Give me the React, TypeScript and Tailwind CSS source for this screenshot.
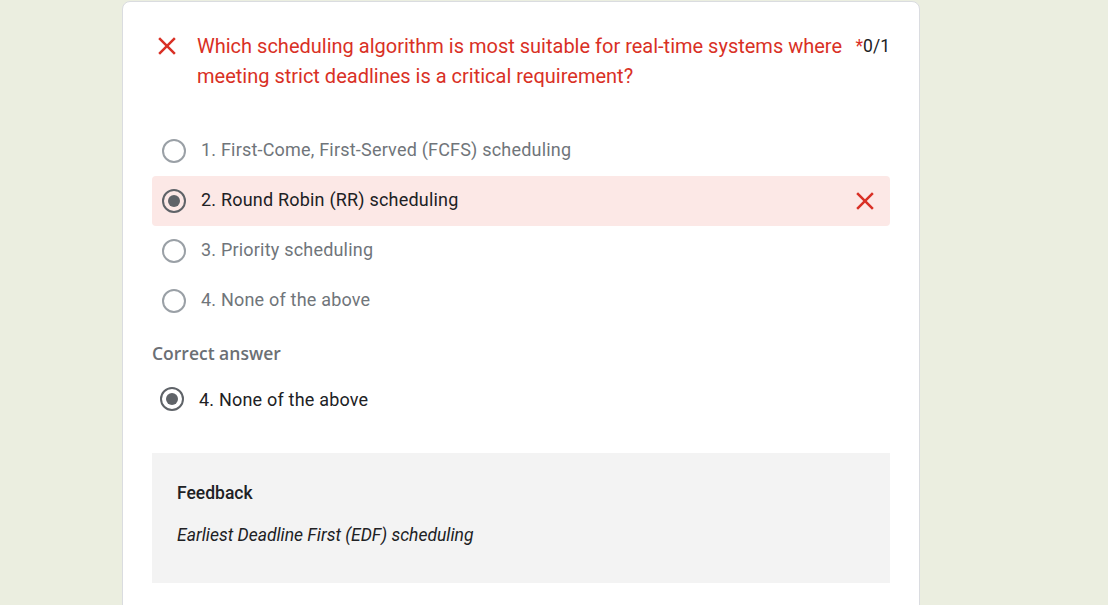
const options = [
  { label: "1. First-Come, First-Served (FCFS) scheduling", picked: false },
  { label: "2. Round Robin (RR) scheduling", picked: true },
  { label: "3. Priority scheduling", picked: false },
  { label: "4. None of the above", picked: false },
];

function CloseIcon({ className }: { className?: string }) {
  return (
    <svg viewBox="0 0 24 24" className={className} fill="currentColor">
      <path d="M19 6.41 17.59 5 12 10.59 6.41 5 5 6.41 10.59 12 5 17.59 6.41 19 12 13.41 17.59 19 19 17.59 13.41 12z" />
    </svg>
  );
}

function Radio({ checked }: { checked: boolean }) {
  return (
    <span
      className={`w-6 h-6 shrink-0 rounded-full border-2 flex items-center justify-center ${
        checked ? "border-[#5f6368]" : "border-[#9aa0a6]"
      }`}
    >
      {checked && <span className="w-3 h-3 rounded-full bg-[#5f6368]" />}
    </span>
  );
}

export default function App() {
  return (
    <div
      className="min-h-screen bg-[#ebeee0] pt-[1px] overflow-hidden"
      style={{ fontFamily: "Roboto, 'Liberation Sans', sans-serif" }}
    >
      <div className="ml-[122px] w-[798px] bg-white border border-[#dadce0] rounded-lg px-[29px] pt-[29px] pb-10">
        {/* Question header */}
        <div className="flex items-start">
          <div className="w-[30px] h-[30px] flex items-center justify-center shrink-0">
            <CloseIcon className="w-[30px] h-[30px] shrink-0 text-[#d93025]" />
          </div>
          <p className="ml-[15px] flex-1 text-[20px] leading-[30px] text-[#d93025] pr-3">
            Which scheduling algorithm is most suitable for real-time systems where meeting strict deadlines is a critical requirement?
          </p>
          <div className="text-[17.5px] leading-[30px] text-[#202124] shrink-0">
            <span className="text-[#d93025]">*</span>0/1
          </div>
        </div>

        {/* Options */}
        <div className="mt-[35px]">
          {options.map((o) => (
            <div
              key={o.label}
              className={`h-[50px] flex items-center pl-[10px] pr-[10px] rounded ${o.picked ? "bg-[#fce8e6]" : ""}`}
            >
              <Radio checked={o.picked} />
              <span
                className={`ml-[15px] flex-1 text-[18px] tracking-[0.2px] -mt-[3px] ${o.picked ? "text-[#202124]" : "text-[#70757a]"}`}
              >
                {o.label}
              </span>
              {o.picked && <CloseIcon className="w-[30px] h-[30px] text-[#d93025]" />}
            </div>
          ))}
        </div>

        {/* Correct answer */}
        <div
          className="mt-[15px] text-[17.5px] leading-6 font-semibold text-[#6b6f74]"
          style={{ fontFamily: "'Open Sans', Roboto, sans-serif" }}
        >
          Correct answer
        </div>
        <div className="h-[50px] flex items-center pl-2 mt-[9px]">
          <Radio checked />
          <span className="ml-[15px] text-[18px] tracking-[0.2px] text-[#202124]">4. None of the above</span>
        </div>

        {/* Feedback */}
        <div className="mt-[29px] bg-[#f3f3f3] px-[25px] pt-[28px] pb-[36px]">
          <div className="text-[17.5px] leading-6 font-medium text-[#202124]">Feedback</div>
          <div className="mt-[18px] text-[17.5px] leading-6 italic text-[#202124]">
            Earliest Deadline First (EDF) scheduling
          </div>
        </div>
      </div>
    </div>
  );
}
